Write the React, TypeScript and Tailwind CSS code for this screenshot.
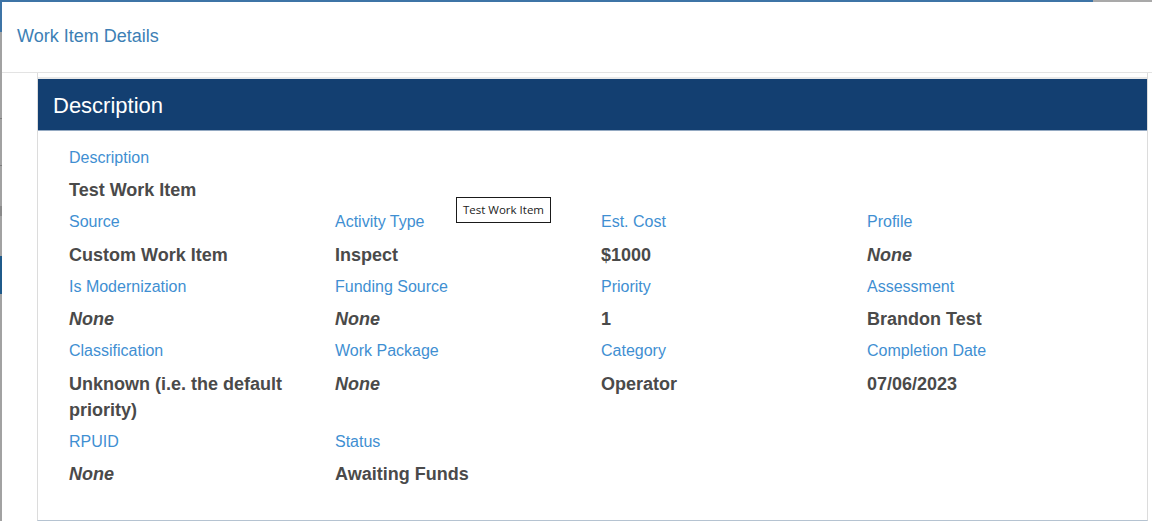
import React from "react";

type Field = { label: string; value: string; none?: boolean };

const rows: Field[][] = [
  [
    { label: "Source", value: "Custom Work Item" },
    { label: "Activity Type", value: "Inspect" },
    { label: "Est. Cost", value: "$1000" },
    { label: "Profile", value: "None", none: true },
  ],
  [
    { label: "Is Modernization", value: "None", none: true },
    { label: "Funding Source", value: "None", none: true },
    { label: "Priority", value: "1" },
    { label: "Assessment", value: "Brandon Test" },
  ],
  [
    { label: "Classification", value: "Unknown (i.e. the default priority)" },
    { label: "Work Package", value: "None", none: true },
    { label: "Category", value: "Operator" },
    { label: "Completion Date", value: "07/06/2023" },
  ],
  [
    { label: "RPUID", value: "None", none: true },
    { label: "Status", value: "Awaiting Funds" },
  ],
];

function Cell({ f }: { f: Field }) {
  return (
    <div className="pr-[15px]">
      <div className="text-[16px] leading-[20px] text-[#3f8fd2] mb-[9.2px]">{f.label}</div>
      <div
        className={
          "text-[18px] leading-[26px] font-bold text-[#4a4a4a] mb-[9.3px] " + (f.none ? "italic" : "")
        }
      >
        {f.value}
      </div>
    </div>
  );
}

export default function App() {
  return (
    <div
      className="relative w-[1152px] h-[521px] overflow-hidden bg-[#9b9b9b] flex flex-col"
      style={{ fontFamily: '"Liberation Sans", Arial, sans-serif' }}
    >
      <div className="h-[2px] flex shrink-0">
        <div className="w-[1093px] bg-[#3d74a6]" />
        <div className="flex-1 bg-[#a9a9a9]" />
      </div>
      <div className="flex flex-1 min-h-0">
        <div className="w-[2px] flex flex-col shrink-0">
          <div className="h-[30px] bg-[#3d74a6]" />
          <div className="h-[86px] bg-[#a2a2a2]" />
          <div className="h-[1px] bg-[#7d7d7d]" />
          <div className="h-[46px] bg-[#a2a2a2]" />
          <div className="h-[1px] bg-[#7d7d7d]" />
          <div className="h-[40px] bg-[#a2a2a2]" />
          <div className="h-[10px] bg-[#8a8a8a]" />
          <div className="h-[40px] bg-[#a2a2a2]" />
          <div className="h-[38px] bg-[#1f5a8a]" />
          <div className="flex-1 bg-[#a2a2a2]" />
        </div>
        <div className="flex-1 bg-white flex flex-col min-w-0">
          <div className="h-[71px] shrink-0 border-b border-[#e3e3e3] flex items-center pl-[15px] pb-[1px]">
            <span className="text-[18px] text-[#3d7fb5]">Work Item Details</span>
          </div>
          <div className="flex-1 min-h-0 pl-[35px] pr-[4px] flex flex-col">
            <div className="flex-1 border-x border-b border-x-[#dcdcdc] border-b-[#b5c3d1] flex flex-col">
              <div className="h-[4px] shrink-0" />
              <div className="h-[2px] shrink-0 bg-[#e8e8e8]" />
              <div className="h-[52px] shrink-0 bg-[#133f71] border-b border-[#94a9c2] flex items-center pl-[15px] pt-[2px]">
                <span className="text-[22px] text-white leading-none">Description</span>
              </div>
              <div className="pt-[17px] pl-[31px]">
                <Cell f={{ label: "Description", value: "Test Work Item" }} />
                {rows.map((r, i) => (
                  <div key={i} className="grid grid-cols-[266px_266px_266px_266px]">
                    {r.map((f) => (
                      <Cell key={f.label} f={f} />
                    ))}
                  </div>
                ))}
              </div>
            </div>
          </div>
        </div>
      </div>
      <div
        className="absolute left-[456px] top-[197px] w-[95px] h-[26px] border border-[#1a1a1a] bg-white flex items-center justify-center text-[11.5px] text-[#222]"
        style={{ fontFamily: '"Open Sans", "Noto Sans", sans-serif' }}
      >
        Test Work Item
      </div>
    </div>
  );
}
